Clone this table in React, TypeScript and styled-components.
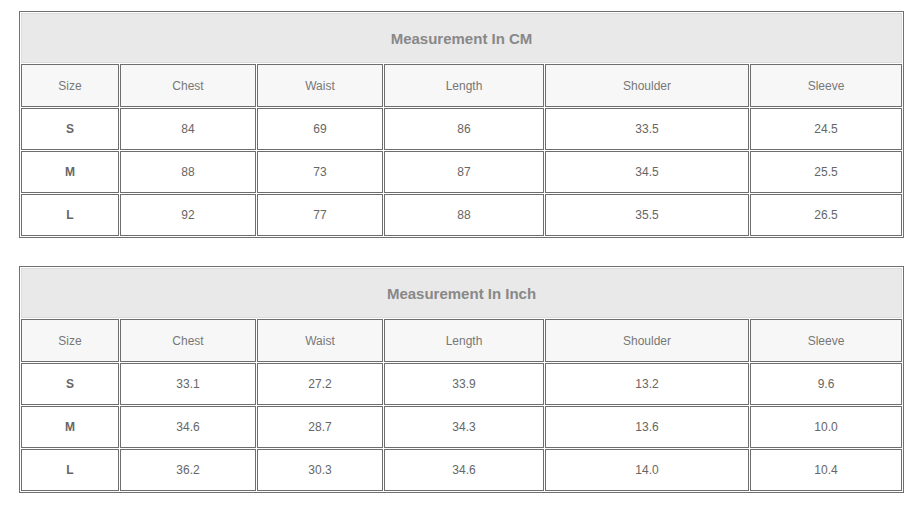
import styled, { createGlobalStyle } from "styled-components";

const GlobalStyle = createGlobalStyle`
  html, body {
    margin: 0;
    padding: 0;
    background: #fff;
  }
  body {
    font-family: "Liberation Sans", Arial, sans-serif;
  }
`;

interface SizeRow {
  size: string;
  values: string[];
}

interface ChartData {
  title: string;
  rows: SizeRow[];
}

const columns = ["Size", "Chest", "Waist", "Length", "Shoulder", "Sleeve"];
const widths = [98, 136, 126, 160, 204, 152];

const charts: ChartData[] = [
  {
    title: "Measurement In CM",
    rows: [
      { size: "S", values: ["84", "69", "86", "33.5", "24.5"] },
      { size: "M", values: ["88", "73", "87", "34.5", "25.5"] },
      { size: "L", values: ["92", "77", "88", "35.5", "26.5"] },
    ],
  },
  {
    title: "Measurement In Inch",
    rows: [
      { size: "S", values: ["33.1", "27.2", "33.9", "13.2", "9.6"] },
      { size: "M", values: ["34.6", "28.7", "34.3", "13.6", "10.0"] },
      { size: "L", values: ["36.2", "30.3", "34.6", "14.0", "10.4"] },
    ],
  },
];

const App = () => {
  return (
    <SPage>
      <GlobalStyle />
      {charts.map(chart => (
        <STable key={chart.title}>
          <colgroup>
            {widths.map((w, i) => (
              <SCol key={i} $w={w} />
            ))}
          </colgroup>
          <thead>
            <tr>
              <STitle colSpan={6}>{chart.title}</STitle>
            </tr>
            <tr>
              {columns.map(col => (
                <SHead key={col}>{col}</SHead>
              ))}
            </tr>
          </thead>
          <tbody>
            {chart.rows.map(row => (
              <tr key={row.size}>
                <SCell $bold>{row.size}</SCell>
                {row.values.map((v, i) => (
                  <SCell key={i}>{v}</SCell>
                ))}
              </tr>
            ))}
          </tbody>
        </STable>
      ))}
    </SPage>
  );
};

const SPage = styled.div`
  display: flex;
  flex-direction: column;
  gap: 28px;
  padding: 11px 0 0 19px;
`;

const STable = styled.table`
  width: 884px;
  table-layout: fixed;
  border-collapse: separate;
  border-spacing: 1px;
  border: 1px solid #707070;
  background: #fff;
`;

const SCol = styled.col<{ $w: number }>`
  width: ${p => p.$w}px;
`;

const STitle = styled.th`
  box-sizing: border-box;
  height: 50px;
  padding: 0;
  background: #e9e9e9;
  border: 1px solid #dcdcdc;
  color: #888;
  font-size: 15px;
  font-weight: bold;
  text-align: center;
`;

const SHead = styled.th`
  box-sizing: border-box;
  height: 43px;
  padding: 0;
  background: #f7f7f7;
  border: 1px solid #6e6e6e;
  color: #777;
  font-size: 12px;
  font-weight: normal;
  text-align: center;
`;

const SCell = styled.td<{ $bold?: boolean }>`
  box-sizing: border-box;
  height: 42px;
  padding: 0;
  background: #fff;
  border: 1px solid #6e6e6e;
  color: #666;
  font-size: 12px;
  font-weight: ${p => (p.$bold ? "bold" : "normal")};
  text-align: center;
`;

export default App;
